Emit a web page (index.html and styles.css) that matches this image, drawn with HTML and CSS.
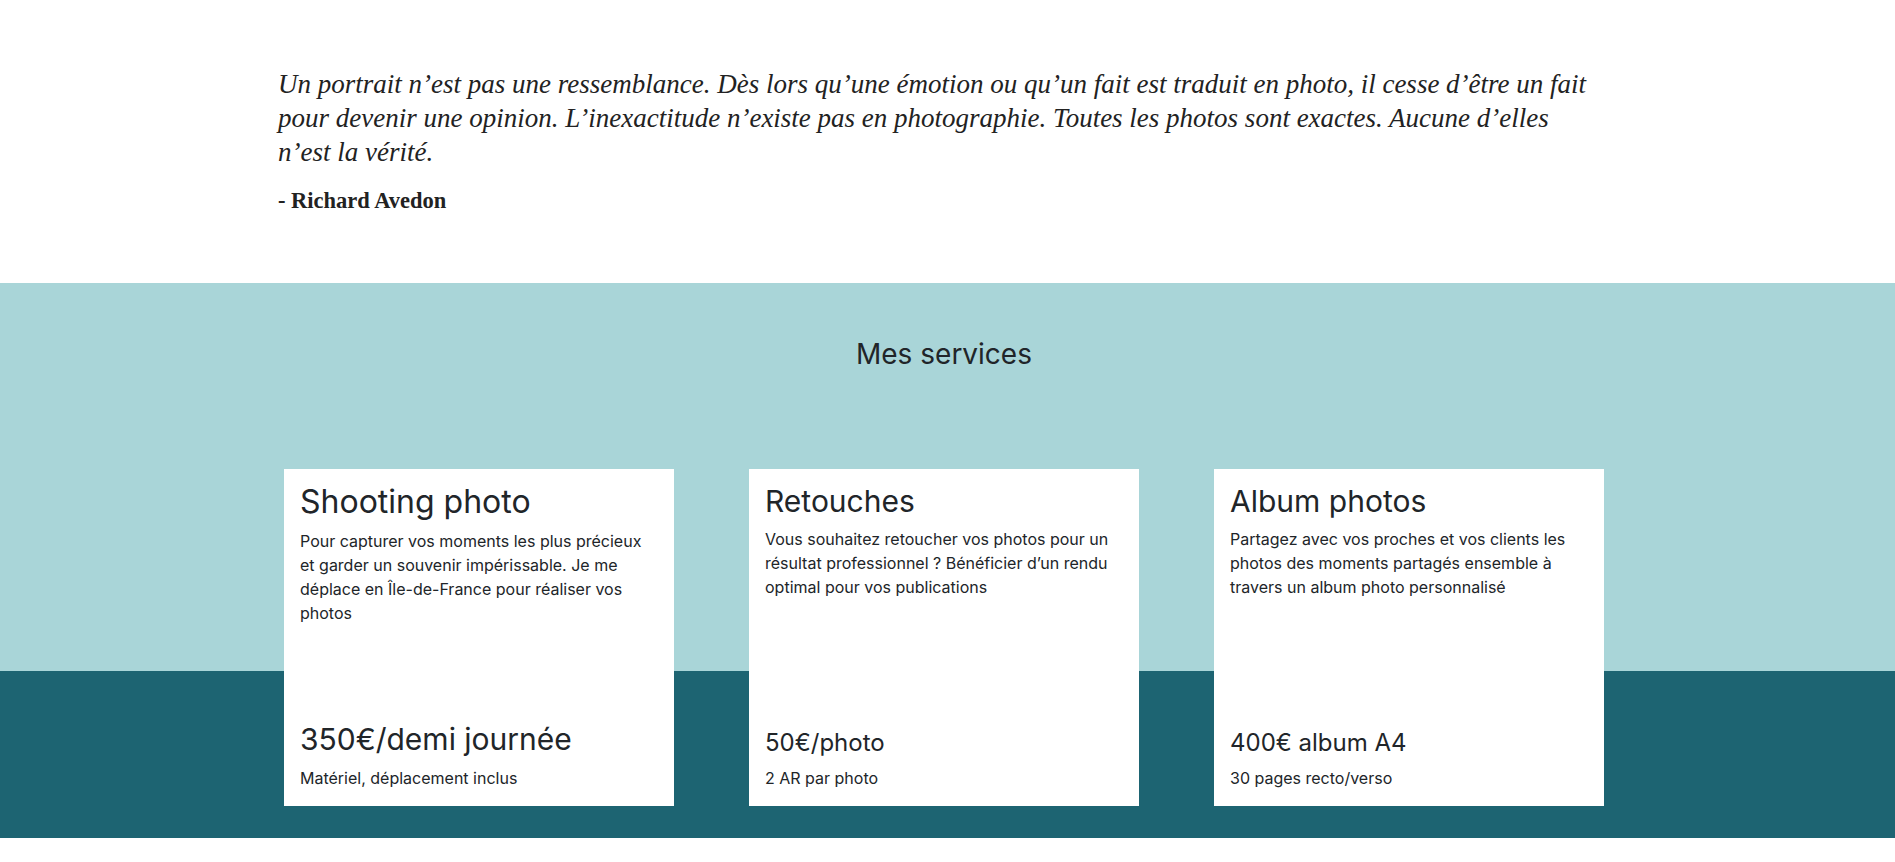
FILE: index.html
```html
<!DOCTYPE html>
<html lang="fr">
<head>
<meta charset="utf-8">
<title>Mes services</title>
<link rel="stylesheet" href="styles.css">
</head>
<body>
<section class="quote-section">
  <div class="container">
    <blockquote class="quote">
      <p class="quote-text">Un portrait n’est pas une ressemblance. Dès lors qu’une émotion ou qu’un fait est traduit en photo, il cesse d’être un fait pour devenir une opinion. L’inexactitude n’existe pas en photographie. Toutes les photos sont exactes. Aucune d’elles n’est la vérité.</p>
      <p class="quote-author">- Richard Avedon</p>
    </blockquote>
  </div>
</section>
<section class="services">
  <div class="container">
    <h2 class="services-title">Mes services</h2>
    <div class="cards">
      <article class="card card-featured">
        <div class="card-top">
          <h3 class="card-title">Shooting photo</h3>
          <p class="card-text">Pour capturer vos moments les plus précieux et garder un souvenir impérissable. Je me déplace en Île-de-France pour réaliser vos photos</p>
        </div>
        <div class="card-bottom">
          <h4 class="card-price">350€/demi journée</h4>
          <p class="card-note">Matériel, déplacement inclus</p>
        </div>
      </article>
      <article class="card">
        <div class="card-top">
          <h3 class="card-title">Retouches</h3>
          <p class="card-text">Vous souhaitez retoucher vos photos pour un résultat professionnel ? Bénéficier d’un rendu optimal pour vos publications</p>
        </div>
        <div class="card-bottom">
          <h4 class="card-price">50€/photo</h4>
          <p class="card-note">2 AR par photo</p>
        </div>
      </article>
      <article class="card">
        <div class="card-top">
          <h3 class="card-title">Album photos</h3>
          <p class="card-text">Partagez avec vos proches et vos clients les photos des moments partagés ensemble à travers un album photo personnalisé</p>
        </div>
        <div class="card-bottom">
          <h4 class="card-price">400€ album A4</h4>
          <p class="card-note">30 pages recto/verso</p>
        </div>
      </article>
    </div>
  </div>
</section>
</body>
</html>
```
FILE: styles.css
```css
* { box-sizing: border-box; }
html, body { margin: 0; padding: 0; }
body {
  background: #ffffff;
  color: #212529;
  font-family: Inter, "Liberation Sans", sans-serif;
  height: 862px;
  overflow: hidden;
}
.container {
  width: 1332px;
  margin-left: calc(50% - 669.5px);
}
.quote-section {
  padding-top: 67px;
  padding-bottom: 67px;
}
.quote { margin: 0; }
.quote-text {
  margin: 0;
  font-family: "Liberation Serif", "DejaVu Serif", serif;
  font-style: italic;
  font-size: 27px;
  line-height: 34px;
  color: #222;
  max-width: 1322px;
}
.quote-author {
  margin: 17px 0 0;
  font-family: "Liberation Serif", "DejaVu Serif", serif;
  font-weight: bold;
  font-size: 22.5px;
  line-height: 30px;
  color: #222;
}
.services {
  background: linear-gradient(to bottom, #a9d5d8 0, #a9d5d8 388px, #1d6472 388px, #1d6472 100%);
  padding-top: 54px;
  padding-bottom: 32px;
}
.services-title {
  margin: 0;
  text-align: center;
  font-weight: 400;
  font-size: 28px;
  line-height: 34px;
}
.cards {
  display: flex;
  gap: 75px;
  width: 1320px;
  margin: 98px auto 0;
}
.card {
  width: 390px;
  height: 337px;
  background: #fff;
  padding: 14px 16px 16px;
  display: flex;
  flex-direction: column;
  justify-content: space-between;
}
.card-title {
  margin: 0 0 8px;
  font-weight: 400;
  font-size: 30px;
  line-height: 36px;
}
.card-featured .card-title { font-size: 32px; line-height: 38px; }
.card-text {
  margin: 0;
  font-size: 16px;
  line-height: 24px;
}
.card-price {
  margin: 0 0 9px;
  font-weight: 400;
  font-size: 24px;
  line-height: 29px;
}
.card-featured .card-price { font-size: 30px; line-height: 36px; }
.card-note {
  margin: 0;
  font-size: 16px;
  line-height: 24px;
}
```
